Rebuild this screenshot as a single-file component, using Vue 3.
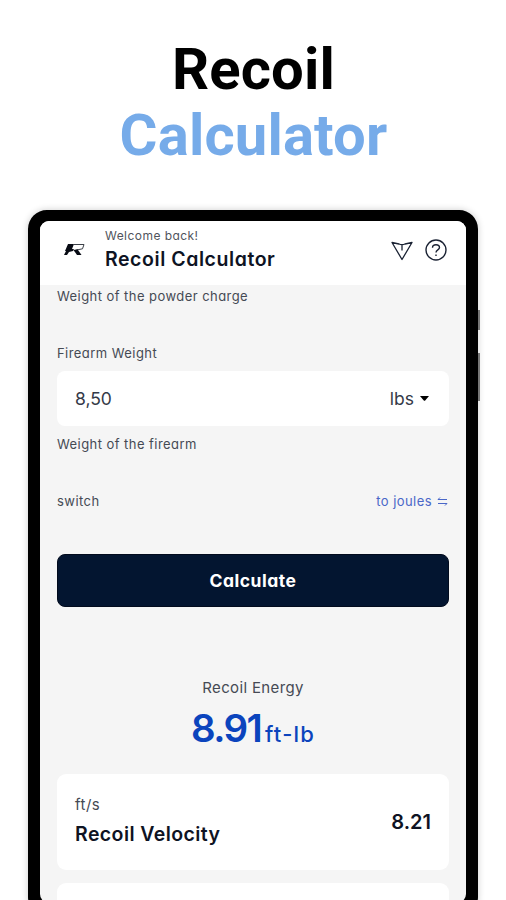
<script setup>
const results = [{ unit: 'ft/s', name: 'Recoil Velocity', value: '8.21' }]
</script>

<template>
  <main class="page">
    <h1 class="title"><span class="t1">Recoil</span><span class="t2">Calculator</span></h1>
    <div class="phone">
      <i class="side side-a"></i><i class="side side-b"></i>
      <div class="screen">
        <header class="bar">
          <svg class="logo" viewBox="0 0 22 14" width="22" height="14">
            <path d="M4 1H10L8 6L10 6L9 8L5 9L3 12H0L2 8H1Z" fill="#080b14" />
            <path d="M9 1.5H20L18.5 5.8L12.5 7" fill="none" stroke="#3c4048" stroke-width="1" />
            <path d="M9.5 7L13.5 6.3L17.5 12H13Z" fill="#080b14" />
          </svg>
          <div class="names">
            <span class="tx welcome">Welcome back!</span>
            <span class="tx app">Recoil Calculator</span>
          </div>
          <svg class="send" viewBox="0 0 22 20" width="22" height="20" fill="none" stroke="#1b2334" stroke-width="1.3" stroke-linejoin="round">
            <path d="M1 1.5L8 3Q11 4.5 14 3L21 1.5L11 18.5Z M11 4V9.5" />
          </svg>
          <svg class="help" viewBox="0 0 22 22" width="22" height="22" fill="none" stroke="#1b2334" stroke-width="1.4">
            <circle cx="11" cy="11" r="10" />
            <path d="M7.5 8.7C7.5 4.7 14.5 4.8 14.5 8.6C14.5 11 11 10.8 11 13.5M11 15.5V17" />
          </svg>
        </header>
        <section class="body">
          <span class="tx small powder">Weight of the powder charge</span>
          <span class="tx small firearm">Firearm Weight</span>
          <div class="field">
            <span class="tx amount">8,50</span>
            <span class="tx unit">lbs</span>
            <svg class="caret" viewBox="0 0 9 5" width="9" height="5"><path d="M0 0H9L5.2 4.4Q4.5 5 3.8 4.4Z" /></svg>
          </div>
          <span class="tx small hint">Weight of the firearm</span>
          <div class="switch">
            <span class="tx small sw">switch</span>
            <span class="tx small joules">to joules</span>
            <svg viewBox="0 0 11 9" width="11" height="9" fill="none" stroke="#4a67c8" stroke-width="1"><path d="M3 .5L1 2.5H10M8 8.5L10 6.5H1" /></svg>
          </div>
          <button class="calc"><span class="tx">Calculate</span></button>
          <div class="energy"><span class="tx">Recoil Energy</span></div>
          <div class="result"><span class="tx num">8.91</span><span class="tx ftlb">ft-lb</span></div>
          <article v-for="r in results" :key="r.name" class="card">
            <div class="names">
              <span class="tx fts">{{ r.unit }}</span>
              <span class="tx vel">{{ r.name }}</span>
            </div>
            <span class="tx val">{{ r.value }}</span>
          </article>
          <article class="card"></article>
        </section>
      </div>
    </div>
  </main>
</template>

<style>
body { background: #fff; overflow: hidden; }
</style>
<style scoped>
* { box-sizing: border-box; }
.page { height: 900px; overflow: hidden; font-family: Inter, "Liberation Sans", sans-serif; font-feature-settings: "cv11"; color: #1b2334; }
.tx { white-space: nowrap; display: block; }
.title { margin: 0; padding: 36px 0 0 1px; height: 210px; font: 700 58px/66px Roboto, sans-serif; letter-spacing: .15px; display: flex; flex-direction: column; align-items: center; }
.t1 { color: #000; }
.t2 { color: #76abe9; }
.phone { position: relative; margin-left: 28px; width: 450px; height: 706px; border: 12px solid #000; border-top-width: 11px; border-radius: 19px; box-shadow: 0 0 7px rgba(0,0,0,.2); background: #000; }
.side { position: absolute; right: -14px; width: 2px; background: #777; }
.side-a { top: 89px; height: 20px; }
.side-b { top: 132px; height: 48px; }
.screen { height: 682px; border-radius: 9px; overflow: hidden; background: #f5f5f5; }
.bar { height: 64px; background: #fff; display: flex; align-items: flex-start; padding-left: 24px; }
.logo { margin-top: 22px; margin-right: 19px; }
.names { display: flex; flex-direction: column; }
.bar .names { width: 286px; padding-top: 5px; }
.welcome { font-size: 12px; line-height: 19px; color: #50545c; letter-spacing: .45px; }
.app { font-size: 19.5px; line-height: 28px; font-weight: 600; color: #0e1323; letter-spacing: .56px; }
.send { margin-top: 20px; margin-right: 12px; flex: none; }
.help { margin-top: 18px; flex: none; }
.body { padding: 0 17px; display: flex; flex-direction: column; }
.small { font-size: 13px; line-height: 20px; color: #454a54; letter-spacing: .44px; }
.powder { margin-top: 1px; }
.firearm { margin-top: 37px; }
.field { margin-top: 8px; height: 55px; border-radius: 8px; background: #fff; display: flex; align-items: center; padding: 0 20px 0 18px; }
.amount { font-size: 17.5px; margin-right: auto; color: #343a48; }
.unit { font-size: 17.5px; color: #343a48; }
.caret { margin-left: 6px; }
.hint { margin-top: 8px; }
.switch { margin-top: 37px; display: flex; align-items: center; }
.switch svg { margin-right: 1px; }
.sw { margin-right: auto; }
.joules { color: #4a67c8; margin-right: 5px; }
.calc { margin: 43px 0 0; padding: 0; width: 392px; height: 53px; border: 1px solid #020b1d; border-radius: 8px; background: #031530; color: #fff; font: inherit; font-size: 17.5px; font-weight: 700; letter-spacing: .5px; display: flex; align-items: center; justify-content: center; }
.energy { margin-top: 70px; height: 22px; display: flex; justify-content: center; font-size: 15px; line-height: 22px; letter-spacing: .35px; color: #454a54; }
.result { margin-top: 6px; height: 50px; display: flex; align-items: baseline; justify-content: center; color: #0b44bd; line-height: 46px; gap: 4px; }
.num { font-size: 38.5px; font-weight: 600; letter-spacing: -1.6px; }
.ftlb { font-size: 22px; font-weight: 500; letter-spacing: 1.2px; }
.card { width: 392px; height: 96px; flex: none; margin-bottom: 13px; border-radius: 9px; background: #fff; display: flex; align-items: center; justify-content: space-between; padding: 0 18px; }
.result + .card { margin-top: 19px; }
.fts { font-size: 15px; line-height: 24px; color: #454a54; letter-spacing: .5px; }
.vel { font-size: 19.5px; line-height: 35px; font-weight: 600; color: #0e1323; letter-spacing: .42px; }
.val { font-size: 20px; font-weight: 600; color: #0e1323; }
</style>
